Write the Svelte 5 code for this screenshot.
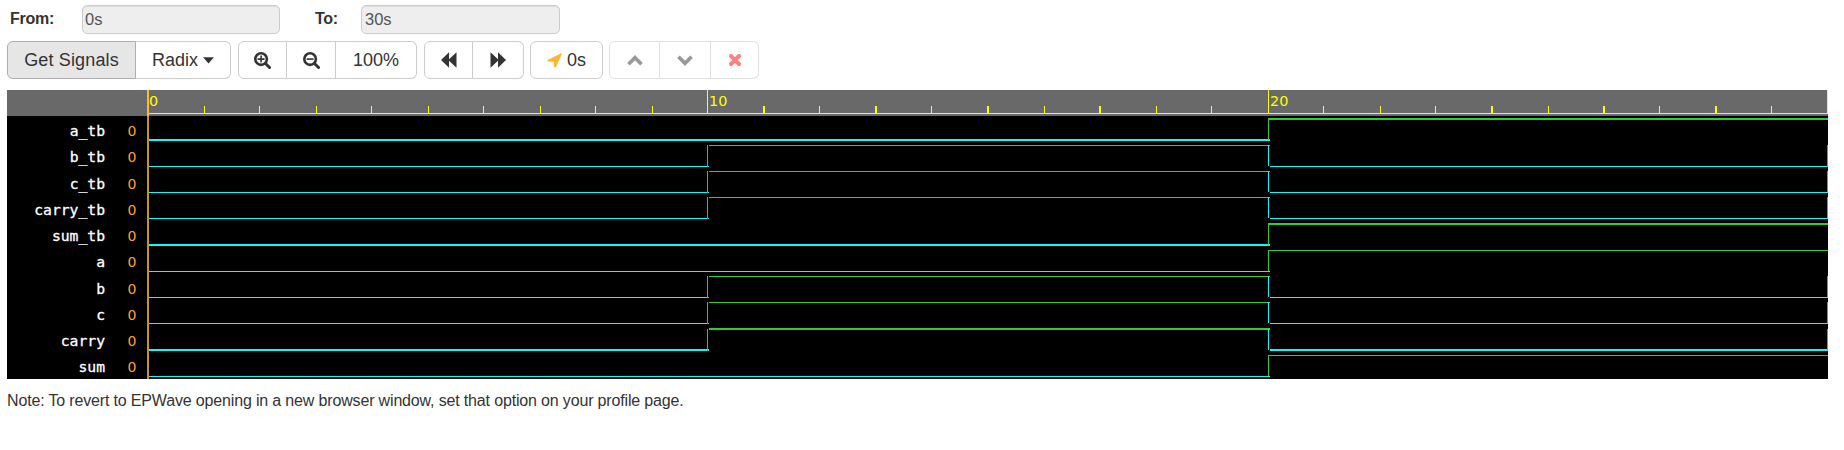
<script>
  const GREEN = '#32cd32';
  const CYAN = '#00ffff';
  const T10 = 560;
  const T20 = 1121;
  const END = 1681;

  // hi / lo: vertical offsets of each level; thick levels take two pixels
  const signals = [
    { name: 'a_tb', hi: 28, lo: 49, w: 2, kind: 'late' },
    { name: 'b_tb', hi: 55, lo: 76, w: 1, kind: 'pulse' },
    { name: 'c_tb', hi: 81, lo: 102, w: 1, kind: 'pulse' },
    { name: 'carry_tb', hi: 107, lo: 128, w: 1, kind: 'pulse' },
    { name: 'sum_tb', hi: 133, lo: 154, w: 2, kind: 'late' },
    { name: 'a', hi: 160, lo: 181, w: 1, kind: 'late' },
    { name: 'b', hi: 186, lo: 207, w: 1, kind: 'pulse' },
    { name: 'c', hi: 212, lo: 233, w: 1, kind: 'pulse' },
    { name: 'carry', hi: 238, lo: 259, w: 2, kind: 'pulse' },
    { name: 'sum', hi: 265, lo: 286, w: 1, kind: 'late' }
  ];

  function rects(s) {
    const h = s.lo - s.hi;
    if (s.kind === 'late') {
      return [
        [2, s.lo, T20, s.w, CYAN],
        [T20, s.hi, 1, h + s.w - 1, GREEN],
        [T20, s.hi, END - T20, s.w, GREEN]
      ];
    }
    return [
      [2, s.lo, T10, s.w, CYAN],
      [T10, s.hi + s.w - 1, 1, h + 1, GREEN],
      [T10 + 2, s.hi, T20 - T10, s.w, GREEN],
      [T20, s.hi + s.w - 1, 1, h, CYAN],
      [T20 + 2, s.lo, END - T20 - 2, s.w, CYAN],
      [END - 1, s.hi + s.w - 1, 1, h, GREEN]
    ];
  }

  const ticks = [
    [57, 1], [112, 1], [169, 1], [224, 1], [281, 1], [336, 1], [393, 1], [448, 1], [505, 1],
    [616, 2], [672, 1], [728, 2], [784, 1], [840, 2], [897, 1], [952, 2], [1009, 1], [1064, 1],
    [1176, 1], [1233, 1], [1288, 1], [1344, 2], [1401, 1], [1456, 2], [1512, 1], [1568, 2], [1624, 1]
  ];
</script>

<main>
  <div class="range">
    <label for="from" class="from">From:</label>
    <input id="from" value="0s" disabled />
    <label for="to" class="to">To:</label>
    <input id="to" value="30s" disabled />
  </div>

  <div class="toolbar">
    <div class="group">
      <button class="active" style:width="129px">Get Signals</button>
      <button style:width="95px" class="radix"><span>Radix</span><svg width="11" height="7" viewBox="0 0 11 7"><path d="M0 .3h11L5.5 6.5z" fill="#333" /></svg></button>
    </div>
    <div class="group">
      {#each ['M3.6 7.1h7M7.1 3.6v7', 'M3.6 7.1h7'] as sign}
        <button style:width="49px" aria-label="Zoom">
          <svg width="17" height="17" viewBox="0 0 17 17" fill="none" stroke="#333">
            <circle cx="7.1" cy="7.1" r="5.8" stroke-width="2.6" />
            <path d="M11.5 11.5l4 4" stroke-width="3" stroke-linecap="round" />
            <path d={sign} stroke-width="1.6" />
          </svg>
        </button>
      {/each}
      <button style:width="81px">100%</button>
    </div>
    <div class="group">
      <button style:width="49px" aria-label="Back"><svg width="16" height="16" viewBox="0 0 16 16"><path d="M0 8L8 .3v7L15.5 .3v15.4L8 8.7v7z" fill="#333" /></svg></button>
      <button style:width="51px" aria-label="Forward"><svg width="16" height="16" viewBox="0 0 16 16"><path d="M16 8L8 .3v7L.5 .3v15.4L8 8.7v7z" fill="#333" /></svg></button>
    </div>
    <div class="group">
      <button style:width="73px" class="cursor"><svg width="15" height="15" viewBox="0 0 15 15"><path d="M14.1 .3Q15 .4 14.8 1.2L8.8 13.9Q7.3 15 6.8 13.6V8.4H1.2Q-.2 8 .5 7z" fill="#ffb52e" /></svg><span>0s</span></button>
    </div>
    <div class="group disabled">
      <button style:width="51px" aria-label="Up"><svg width="16" height="11" viewBox="0 0 16 11"><path d="M1.5 9.2L8 2.7l6.5 6.5" fill="none" stroke="#999" stroke-width="3.7" /></svg></button>
      <button style:width="51px" aria-label="Down"><svg width="16" height="11" viewBox="0 0 16 11"><path d="M1.5 1.8L8 8.3l6.5-6.5" fill="none" stroke="#999" stroke-width="3.7" /></svg></button>
      <button style:width="48px" aria-label="Remove"><svg width="12" height="12" viewBox="0 0 12 12"><path d="M2 2l8 8M10 2l-8 8" stroke="#ff8080" stroke-width="3.9" stroke-linecap="round" /></svg></button>
    </div>
  </div>

  <div class="viewer">
    <div class="names">
      {#each signals as s}
        <div class="signal"><span class="name">{s.name}</span><span class="value">0</span></div>
      {/each}
    </div>
    <svg class="wave" width="1681" height="289" shape-rendering="crispEdges">
      <rect width="1681" height="26" fill="#696969" />
      <rect x="2" y="23" width="1679" height="1" fill="#ff0" />
      {#each ticks as [x, w]}
        <rect {x} y="16" width={w} height="7" fill="#ff0" />
      {/each}
      {#each [T10, T20, END - 1] as x}
        <rect {x} y="0" width="1" height="23" fill="#ff0" />
      {/each}
      <text x="2" y="16">0</text>
      <text x="562" y="16">10</text>
      <text x="1123" y="16">20</text>
      {#each signals as s}
        {#each rects(s) as [x, y, w, h, color]}
          <rect {x} {y} width={w} height={h} fill={color} />
        {/each}
      {/each}
      <rect width="2" height="26" fill="#ffb92e" />
      <rect y="26" width="2" height="263" fill="#cc8f2d" />
    </svg>
  </div>

  <p>Note: To revert to EPWave opening in a new browser window, set that option on your profile page.</p>
</main>

<style>
  :global(body) {
    background: #fff;
  }
  main {
    box-sizing: border-box;
    padding: 5px 0 0 7px;
    font: 16px/20px "Liberation Sans", Arial, sans-serif;
    color: #333;
  }
  .range {
    display: flex;
    height: 29px;
  }
  label {
    box-sizing: content-box;
    font-weight: bold;
    letter-spacing: -0.25px;
    line-height: 27px;
  }
  .from {
    width: 72px;
    padding-left: 3px;
  }
  .to {
    width: 46px;
    padding-left: 35px;
  }
  input {
    box-sizing: border-box;
    width: 198px;
    height: 29px;
    margin: 0;
    padding: 0 2px 1px;
    border: 1px solid #ccc;
    border-radius: 5px;
    background: #eee;
    box-shadow: inset 0 1px 1px rgba(0, 0, 0, 0.075);
    color: #555;
    font: 16.5px "Liberation Sans", Arial, sans-serif;
  }
  #to {
    width: 199px;
    padding-left: 3px;
  }
  .toolbar {
    display: flex;
    margin-top: 7px;
    height: 38px;
  }
  .group {
    display: flex;
    margin-right: 7px;
  }
  .group:nth-child(3),
  .group:nth-child(4) {
    margin-right: 6px;
  }
  button {
    box-sizing: border-box;
    display: flex;
    align-items: center;
    justify-content: center;
    height: 38px;
    padding: 0;
    border: 1px solid #ccc;
    border-left-width: 0;
    background: #fff;
    color: #333;
    font: 18px "Liberation Sans", Arial, sans-serif;
  }
  button:first-child {
    border-left-width: 1px;
    border-radius: 6px 0 0 6px;
  }
  button:last-child {
    border-radius: 0 6px 6px 0;
  }
  button:only-child {
    border-radius: 6px;
  }
  .active {
    border-color: #adadad;
    background: #e6e6e6;
    letter-spacing: 0.15px;
  }
  .radix {
    gap: 5px;
  }
  .cursor {
    gap: 5px;
  }
  .disabled button {
    border-color: #e0e0e0;
  }
  .viewer {
    display: flex;
    width: 1821px;
    height: 289px;
    margin-top: 11px;
    background: #000;
  }
  .names {
    box-sizing: border-box;
    width: 140px;
    border-top: 26px solid #696969;
  }
  .signal {
    display: flex;
    height: 26.25px;
    line-height: 30px;
    color: #fff;
  }
  .name {
    width: 98px;
    text-align: right;
    font-family: "DejaVu Sans Mono", monospace;
    font-size: 14.7px;
    -webkit-text-stroke: 0.3px #fff;
  }
  .value {
    margin-left: 22.5px;
    color: #ffa52e;
    font-family: "DejaVu Sans", sans-serif;
    font-size: 14px;
  }
  .wave text {
    fill: #ff0;
    font: 14.4px "DejaVu Sans", sans-serif;
  }
  p {
    margin: 12px 0 0;
    letter-spacing: -0.16px;
    white-space: nowrap;
  }
</style>
